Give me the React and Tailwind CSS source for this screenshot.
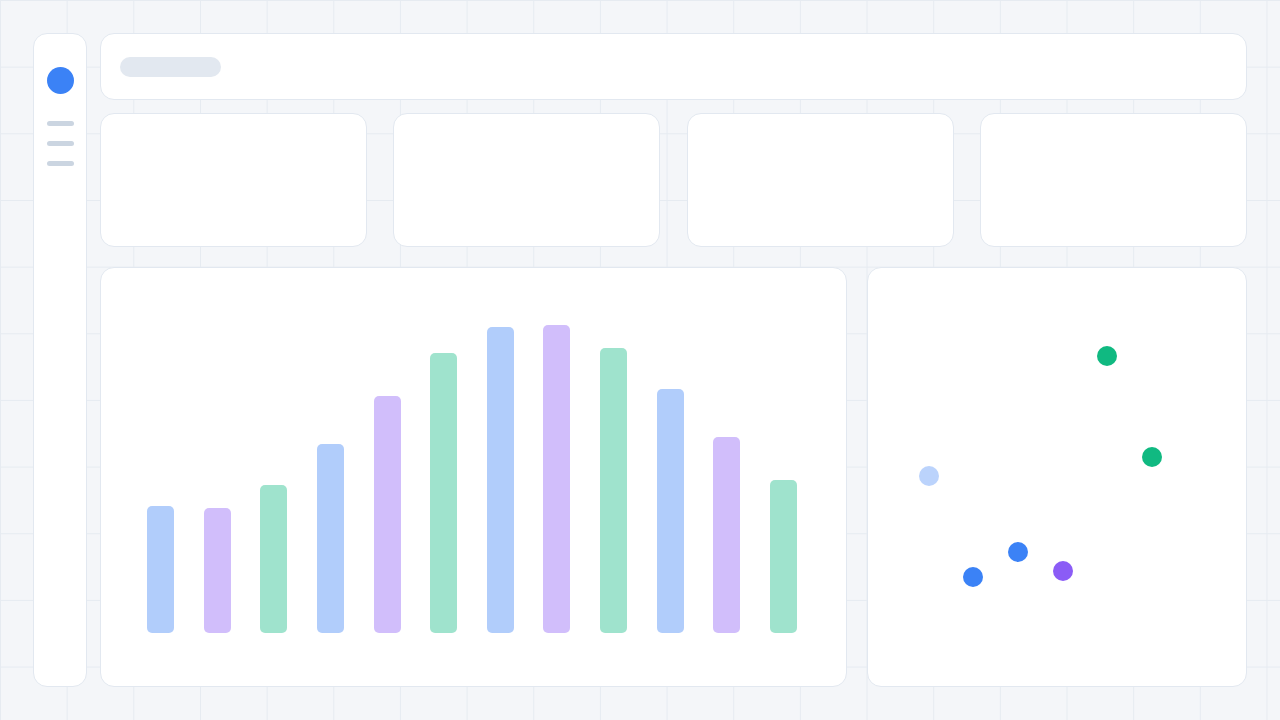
const bars = [
  { h: 127, c: "bg-[#3b82f6]/40" },
  { h: 125, c: "bg-[#8b5cf6]/40" },
  { h: 148, c: "bg-[#10b981]/40" },
  { h: 189, c: "bg-[#3b82f6]/40" },
  { h: 237, c: "bg-[#8b5cf6]/40" },
  { h: 280, c: "bg-[#10b981]/40" },
  { h: 306, c: "bg-[#3b82f6]/40" },
  { h: 308, c: "bg-[#8b5cf6]/40" },
  { h: 285, c: "bg-[#10b981]/40" },
  { h: 244, c: "bg-[#3b82f6]/40" },
  { h: 196, c: "bg-[#8b5cf6]/40" },
  { h: 153, c: "bg-[#10b981]/40" },
];

// scatter points, relative to the card's top-left corner
const dots = [
  { x: 239, y: 88, c: "bg-[#10b981]" },
  { x: 284, y: 189, c: "bg-[#10b981]" },
  { x: 61, y: 208, c: "bg-[#3b82f6]/35" },
  { x: 150, y: 284, c: "bg-[#3b82f6]" },
  { x: 105, y: 309, c: "bg-[#3b82f6]" },
  { x: 195, y: 303, c: "bg-[#8b5cf6]" },
];

function Card({ className = "", children }) {
  return (
    <div className={`bg-white border border-[#e2e8f0] rounded-[14px] ${className}`}>
      {children}
    </div>
  );
}

export default function App() {
  return (
    <div
      className="w-[1280px] h-[720px] bg-[#f4f6f9] p-[33px] flex gap-[13px] overflow-hidden"
      style={{
        backgroundImage:
          "linear-gradient(to right, #e6ebf1 1px, transparent 1px), linear-gradient(to bottom, #e6ebf1 1px, transparent 1px)",
        backgroundSize: "66.667px 66.667px",
      }}
    >
      <Card className="w-[54px] shrink-0 flex flex-col items-center pt-[33px]">
        <div className="w-[27px] h-[27px] rounded-full bg-[#3b82f6]" />
        <div className="mt-[27px] flex flex-col gap-[15px]">
          <div className="w-[27px] h-[5px] rounded-full bg-[#cbd5e1]" />
          <div className="w-[27px] h-[5px] rounded-full bg-[#cbd5e1]" />
          <div className="w-[27px] h-[5px] rounded-full bg-[#cbd5e1]" />
        </div>
      </Card>

      <div className="flex-1 flex flex-col">
        <Card className="h-[67px] shrink-0 flex items-center px-[19px]">
          <div className="w-[101px] h-[20px] rounded-full bg-[#e2e8f0]" />
        </Card>

        <div className="mt-[13px] grid grid-cols-4 gap-[26.667px] h-[134px] shrink-0">
          <Card />
          <Card />
          <Card />
          <Card />
        </div>

        <div className="mt-[20px] flex-1 flex gap-[20px]">
          <Card className="w-[747px] flex items-end justify-between pl-[46px] pr-[49px] pb-[53px]">
            {bars.map((b, i) => (
              <div
                key={i}
                className={`w-[27px] rounded-[5px] ${b.c}`}
                style={{ height: b.h }}
              />
            ))}
          </Card>
          <Card className="flex-1 relative">
            {dots.map((d, i) => (
              <div
                key={i}
                className={`absolute w-[20px] h-[20px] rounded-full ${d.c}`}
                style={{ left: d.x - 10, top: d.y - 10 }}
              />
            ))}
          </Card>
        </div>
      </div>
    </div>
  );
}
